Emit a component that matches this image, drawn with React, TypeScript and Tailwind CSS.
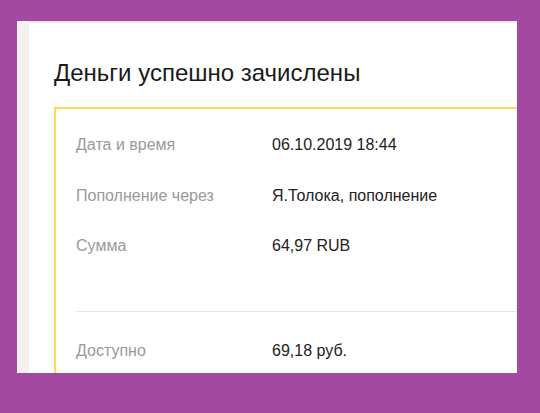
export default function App() {
  const rows = [
    { label: 'Дата и время', value: '06.10.2019 18:44' },
    { label: 'Пополнение через', value: 'Я.Толока, пополнение' },
    { label: 'Сумма', value: '64,97 RUB' },
  ]

  return (
    <div className="w-[540px] h-[413px] bg-[#a349a0] pt-[21px] pl-[17px] overflow-hidden font-['Liberation_Sans',Arial,sans-serif]">
      <div className="w-[500px] h-[352px] flex overflow-hidden bg-white">
        {/* Left strip */}
        <div className="w-[12px] shrink-0 bg-[#f3f2f1]" />

        {/* Content */}
        <div className="flex-1 border-t-2 border-[#e8e8e8] pl-[25px] pt-[36px]">
          <h1 className="text-[24px] leading-[28px] text-[#1a1a1a]">Деньги успешно зачислены</h1>

          <div className="mt-[20px] w-[600px] h-[400px] border-l-2 border-t-2 border-[#ffdb4d] pl-[20px] pt-[26px]">
            {rows.map((row) => (
              <div key={row.label} className="flex h-[50.5px] text-[16px] leading-[20px]">
                <div className="w-[196px] text-[#999]">{row.label}</div>
                <div className="text-[#222]">{row.value}</div>
              </div>
            ))}

            <div className="mt-[24.5px] border-t border-[#e5e5e5] pt-[29px]">
              <div className="flex text-[16px] leading-[20px]">
                <div className="w-[196px] text-[#999]">Доступно</div>
                <div className="text-[#222]">69,18 руб.</div>
              </div>
            </div>
          </div>
        </div>
      </div>
    </div>
  )
}
